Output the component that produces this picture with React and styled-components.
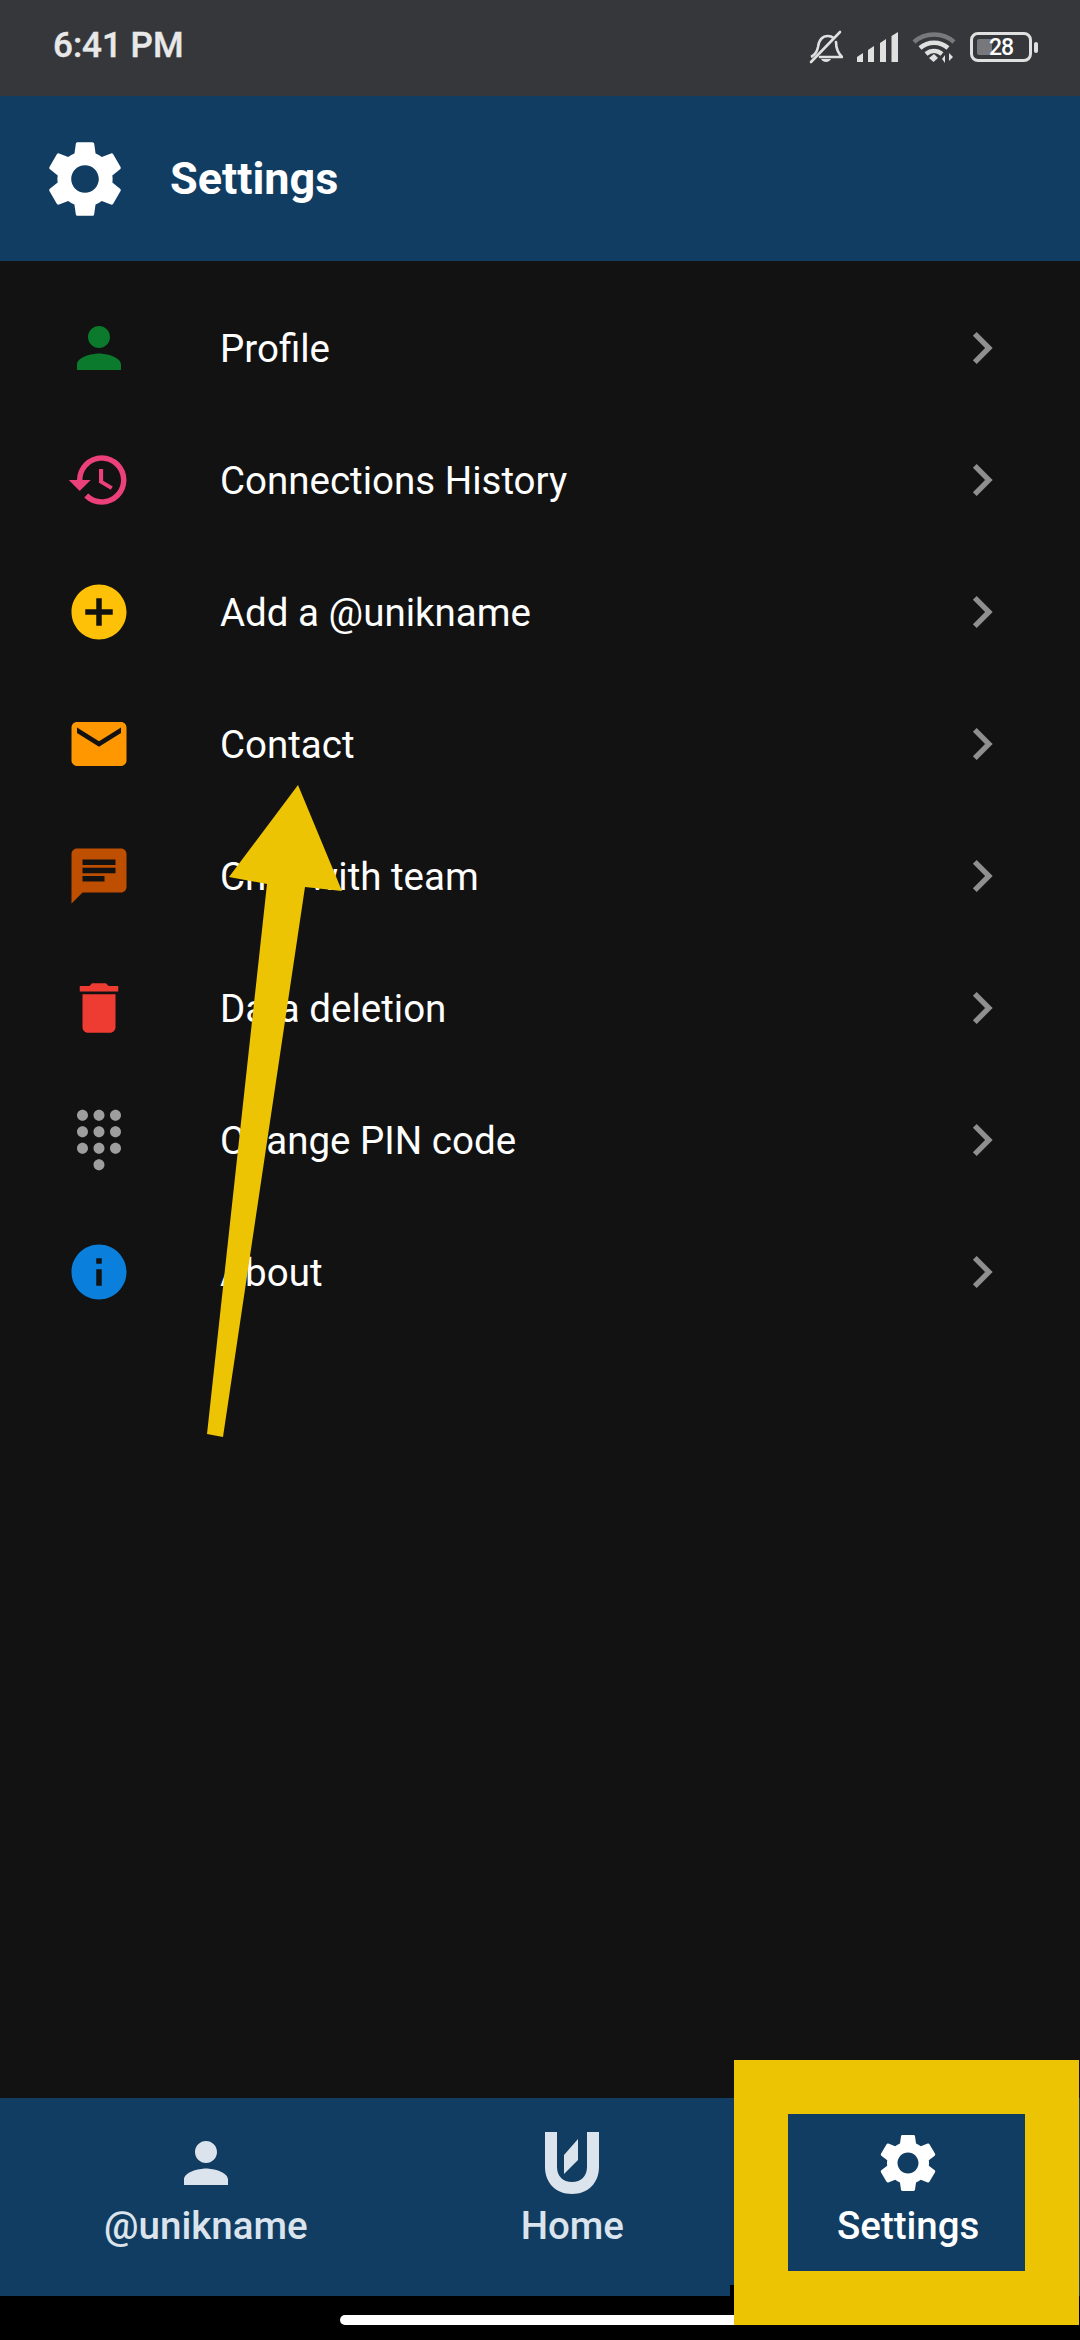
import React from "react";
import styled, { createGlobalStyle } from "styled-components";
import {
  MdSettings,
  MdPerson,
  MdHistory,
  MdAddCircle,
  MdEmail,
  MdChat,
  MdDelete,
  MdDialpad,
  MdInfo,
  MdChevronRight,
} from "react-icons/md";

const GlobalStyle = createGlobalStyle`
  html, body {
    margin: 0;
    padding: 0;
    background: #000;
  }
`;

const Screen = styled.div`
  position: relative;
  display: flex;
  flex-direction: column;
  width: 1080px;
  height: 2340px;
  overflow: hidden;
  background: #121212;
  font-family: Roboto, "Noto Sans", sans-serif;
`;

const StatusBar = styled.div`
  display: flex;
  align-items: center;
  justify-content: space-between;
  height: 96px;
  padding: 0 42px 6px 53px;
  box-sizing: border-box;
  background: #36373b;
`;

const Clock = styled.span`
  color: #e8e8e8;
  font-size: 35px;
  font-weight: 500;
  -webkit-text-stroke: 0.4px #e8e8e8;
`;

const StatusIcons = styled.div`
  display: flex;
  align-items: center;
  gap: 14px;
  padding-top: 4px;
`;

const Header = styled.header`
  display: flex;
  align-items: center;
  gap: 39px;
  height: 165px;
  padding-left: 39px;
  box-sizing: border-box;
  background: #113d63;
  color: #fff;
`;

const HeaderTitle = styled.h1`
  margin: 0;
  font-size: 45px;
  font-weight: 700;
`;

const List = styled.ul`
  flex: 1;
  margin: 0;
  padding: 21px 0 0;
  list-style: none;
`;

const Row = styled.li`
  display: flex;
  align-items: center;
  height: 132px;
  padding: 0 66px 0 66px;
`;

const RowIcon = styled.span`
  display: flex;
  width: 66px;
  margin-right: 88px;
  color: ${(props) => props.$color};
`;

const RowLabel = styled.span`
  flex: 1;
  padding-top: 1px;
  color: #fff;
  font-size: 38.5px;
`;

const Chevron = styled(MdChevronRight)`
  color: #8f8f8f;
`;

const TabBar = styled.nav`
  display: flex;
  align-items: center;
  gap: 213px;
  height: 198px;
  padding: 0 0 16px 104px;
  box-sizing: border-box;
  background: #113d63;
`;

const Tab = styled.div`
  display: flex;
  flex-direction: column;
  align-items: center;
  color: ${(props) => (props.$active ? "#fff" : "#dbe4ec")};
`;

const TabIcon = styled.span`
  display: flex;
  align-items: center;
  justify-content: center;
  height: 70px;
`;

const TabLabel = styled.span`
  margin-top: 4px;
  font-size: 38.5px;
  font-weight: 500;
  line-height: 48px;
`;

const NavArea = styled.div`
  display: flex;
  justify-content: center;
  height: 44px;
  padding-top: 19px;
  box-sizing: border-box;
  background: #000;
`;

const HomeIndicator = styled.div`
  width: 400px;
  height: 10px;
  border-radius: 5px;
  background: #fff;
`;

const Highlight = styled.div`
  position: absolute;
  left: 734px;
  top: 2060px;
  width: 345px;
  height: 265px;
  box-sizing: border-box;
  border: 54px solid #ecc404;

  &::before {
    content: "";
    position: absolute;
    left: -58px;
    top: 171px;
    width: 4px;
    height: 11px;
    background: #000;
  }
`;

const ArrowOverlay = styled.svg`
  position: absolute;
  left: 0;
  top: 0;
`;

const BellOff = () => (
  <svg width="34" height="34" viewBox="0 0 34 34" fill="none" stroke="#e0e0e0" strokeWidth="2.6">
    <path d="M2 27c4-2 6-5 7-10 1-7 4-11 10-11 2 0 4 .6 5.500 2" />
    <path d="M27 12c0 6 2 11 6 15H11" strokeLinecap="round" />
    <path d="M2 32 31 2" strokeLinecap="round" />
    <path d="M12 29h10c-1 2-3 3-5 3s-4-1-5-3z" fill="#e0e0e0" stroke="none" />
  </svg>
);

const Signal = () => (
  <svg width="41" height="30" viewBox="0 0 41 30" fill="#e0e0e0">
    <path d="M0 25 6 21V30H0z" />
    <path d="M11 18 17 14V30H11z" />
    <path d="M23 11 29 7V30H23z" />
    <path d="M34.500 4 41 0V30H34.500z" />
  </svg>
);

const Wifi = () => (
  <svg width="44" height="33" viewBox="0 0 44 33" fill="none" strokeWidth="4.500">
    <path d="M2 11C13 1 31 1 42 11" stroke="#77787b" />
    <path d="M8 17C16 10 28 10 36 17" stroke="#e0e0e0" />
    <path d="M14 23C19 19 25 19 30 23" stroke="#e0e0e0" />
    <path d="M17 27 22 23 26 27 21.500 31z" fill="#e0e0e0" />
    <path d="M33 32V24L30 28zM37 22V30L41 26z" fill="#e0e0e0" />
  </svg>
);

const BatteryWrap = styled.div`
  display: flex;
  align-items: center;
  gap: 2px;
`;

const BatteryBody = styled.div`
  position: relative;
  display: flex;
  align-items: center;
  justify-content: center;
  width: 62px;
  height: 30px;
  box-sizing: border-box;
  border: 3px solid #e0e0e0;
  border-radius: 8px;
  color: #fff;
  font-size: 23px;
  font-weight: 500;
  letter-spacing: -1px;
  overflow: hidden;

  &::before {
    content: "";
    position: absolute;
    left: 4px;
    top: 4px;
    bottom: 4px;
    width: 15px;
    border-radius: 2px;
    background: #77787b;
  }
`;

const BatteryValue = styled.span`
  position: relative;
`;

const BatteryNub = styled.div`
  width: 4px;
  height: 11px;
  border-radius: 2px;
  background: #e0e0e0;
`;

const UnikLogo = () => (
  <svg width="54" height="62" viewBox="0 0 54 62">
    <path
      d="M0 0H12V35C12 44 18 50 27 50S42 44 42 35V0H54V35C54 51 43 62 27 62S0 51 0 35Z"
      fill="currentColor"
    />
    <path d="M19 23 33 7V28L19 42Z" fill="currentColor" />
  </svg>
);

const rows = [
  { label: "Profile", color: "#0b7a2c", Icon: MdPerson },
  { label: "Connections History", color: "#ec407a", Icon: MdHistory },
  { label: "Add a @unikname", color: "#ffc107", Icon: MdAddCircle },
  { label: "Contact", color: "#ff9800", Icon: MdEmail },
  { label: "Chat with team", color: "#bf4f00", Icon: MdChat },
  { label: "Data deletion", color: "#ee3c33", Icon: MdDelete },
  { label: "Change PIN code", color: "#9e9e9e", Icon: MdDialpad },
  { label: "About", color: "#0a7fdc", Icon: MdInfo },
];

export default function App() {
  return (
    <Screen>
      <GlobalStyle />
      <StatusBar>
        <Clock>6:41 PM</Clock>
        <StatusIcons>
          <BellOff />
          <Signal />
          <Wifi />
          <BatteryWrap>
            <BatteryBody>
              <BatteryValue>28</BatteryValue>
            </BatteryBody>
            <BatteryNub />
          </BatteryWrap>
        </StatusIcons>
      </StatusBar>
      <Header>
        <MdSettings size={92} />
        <HeaderTitle>Settings</HeaderTitle>
      </Header>
      <List>
        {rows.map(({ label, color, Icon }) => (
          <Row key={label}>
            <RowIcon $color={color}>
              <Icon size={66} />
            </RowIcon>
            <RowLabel>{label}</RowLabel>
            <Chevron size={64} />
          </Row>
        ))}
      </List>
      <TabBar>
        <Tab>
          <TabIcon>
            <MdPerson size={66} />
          </TabIcon>
          <TabLabel>@unikname</TabLabel>
        </Tab>
        <Tab>
          <TabIcon>
            <UnikLogo />
          </TabIcon>
          <TabLabel>Home</TabLabel>
        </Tab>
        <Tab $active>
          <TabIcon>
            <MdSettings size={70} />
          </TabIcon>
          <TabLabel>Settings</TabLabel>
        </Tab>
      </TabBar>
      <NavArea>
        <HomeIndicator />
      </NavArea>
      <Highlight />
      <ArrowOverlay width="1080" height="2340" viewBox="0 0 1080 2340">
        <polygon
          points="298,785 229,877 267,884 207,1434 223,1437 305,887 342,891"
          fill="#ecc404"
        />
      </ArrowOverlay>
    </Screen>
  );
}
